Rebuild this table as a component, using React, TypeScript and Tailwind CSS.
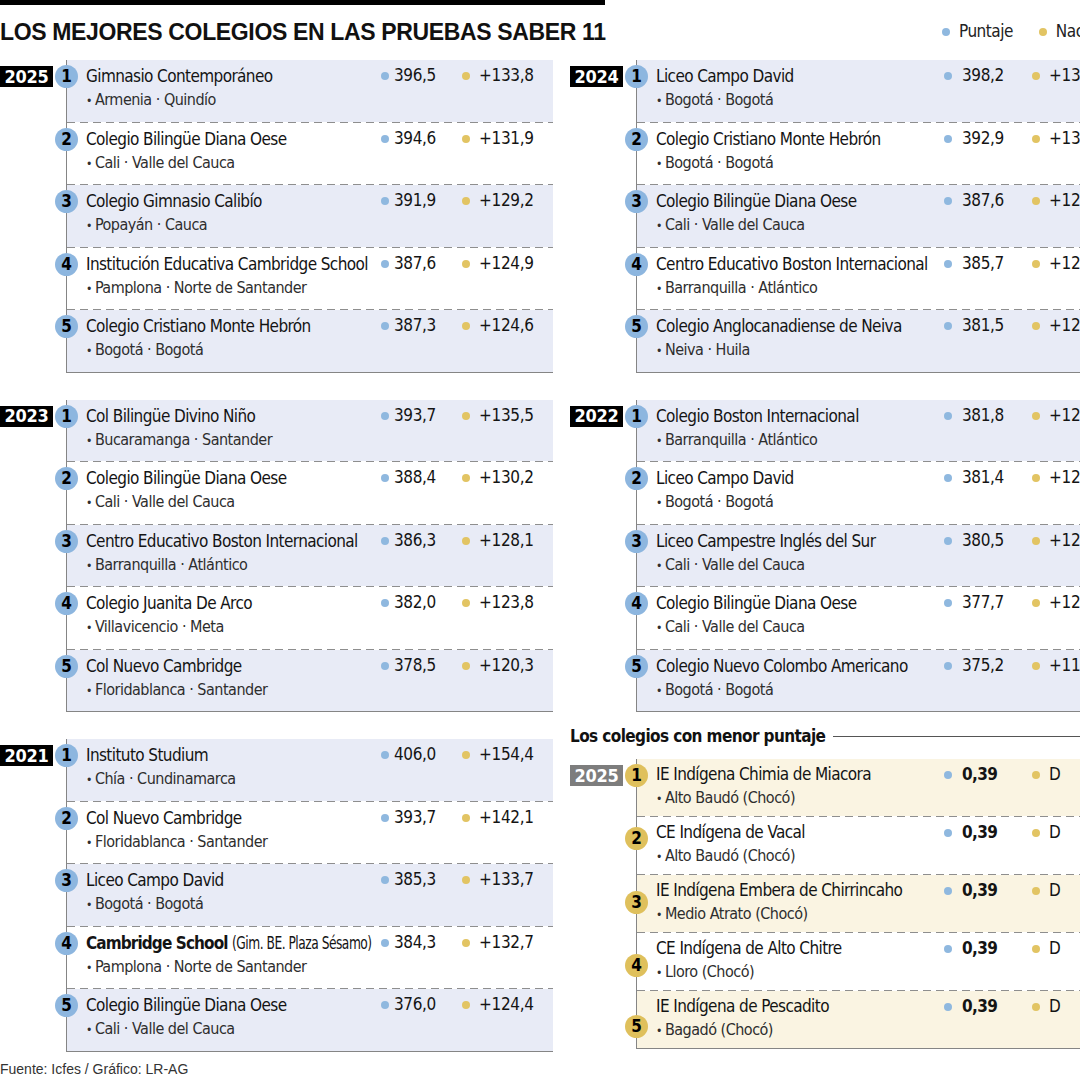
import React from "react";

type School = {
  name: string;
  bold?: string;
  place: string;
  score: string;
  nac: string;
};

const top2025: School[] = [
  { name: "Gimnasio Contemporáneo", place: "Armenia · Quindío", score: "396,5", nac: "+133,8" },
  { name: "Colegio Bilingüe Diana Oese", place: "Cali · Valle del Cauca", score: "394,6", nac: "+131,9" },
  { name: "Colegio Gimnasio Calibío", place: "Popayán · Cauca", score: "391,9", nac: "+129,2" },
  { name: "Institución Educativa Cambridge School", place: "Pamplona · Norte de Santander", score: "387,6", nac: "+124,9" },
  { name: "Colegio Cristiano Monte Hebrón", place: "Bogotá · Bogotá", score: "387,3", nac: "+124,6" },
];

const top2024: School[] = [
  { name: "Liceo Campo David", place: "Bogotá · Bogotá", score: "398,2", nac: "+136,9" },
  { name: "Colegio Cristiano Monte Hebrón", place: "Bogotá · Bogotá", score: "392,9", nac: "+131,6" },
  { name: "Colegio Bilingüe Diana Oese", place: "Cali · Valle del Cauca", score: "387,6", nac: "+126,3" },
  { name: "Centro Educativo Boston Internacional", place: "Barranquilla · Atlántico", score: "385,7", nac: "+124,4" },
  { name: "Colegio Anglocanadiense de Neiva", place: "Neiva · Huila", score: "381,5", nac: "+120,2" },
];

const top2023: School[] = [
  { name: "Col Bilingüe Divino Niño", place: "Bucaramanga · Santander", score: "393,7", nac: "+135,5" },
  { name: "Colegio Bilingüe Diana Oese", place: "Cali · Valle del Cauca", score: "388,4", nac: "+130,2" },
  { name: "Centro Educativo Boston Internacional", place: "Barranquilla · Atlántico", score: "386,3", nac: "+128,1" },
  { name: "Colegio Juanita De Arco", place: "Villavicencio · Meta", score: "382,0", nac: "+123,8" },
  { name: "Col Nuevo Cambridge", place: "Floridablanca · Santander", score: "378,5", nac: "+120,3" },
];

const top2022: School[] = [
  { name: "Colegio Boston Internacional", place: "Barranquilla · Atlántico", score: "381,8", nac: "+126,2" },
  { name: "Liceo Campo David", place: "Bogotá · Bogotá", score: "381,4", nac: "+125,8" },
  { name: "Liceo Campestre Inglés del Sur", place: "Cali · Valle del Cauca", score: "380,5", nac: "+124,9" },
  { name: "Colegio Bilingüe Diana Oese", place: "Cali · Valle del Cauca", score: "377,7", nac: "+122,1" },
  { name: "Colegio Nuevo Colombo Americano", place: "Bogotá · Bogotá", score: "375,2", nac: "+119,6" },
];

const top2021: School[] = [
  { name: "Instituto Studium", place: "Chía · Cundinamarca", score: "406,0", nac: "+154,4" },
  { name: "Col Nuevo Cambridge", place: "Floridablanca · Santander", score: "393,7", nac: "+142,1" },
  { name: "Liceo Campo David", place: "Bogotá · Bogotá", score: "385,3", nac: "+133,7" },
  { name: "(Gim. BE. Plaza Sésamo)", bold: "Cambridge School", place: "Pamplona · Norte de Santander", score: "384,3", nac: "+132,7" },
  { name: "Colegio Bilingüe Diana Oese", place: "Cali · Valle del Cauca", score: "376,0", nac: "+124,4" },
];

const bottom2025: School[] = [
  { name: "IE Indígena Chimia de Miacora", place: "Alto Baudó (Chocó)", score: "0,39", nac: "D" },
  { name: "CE Indígena de Vacal", place: "Alto Baudó (Chocó)", score: "0,39", nac: "D" },
  { name: "IE Indígena Embera de Chirrincaho", place: "Medio Atrato (Chocó)", score: "0,39", nac: "D" },
  { name: "CE Indígena de Alto Chitre", place: "Lloro (Chocó)", score: "0,39", nac: "D" },
  { name: "IE Indígena de Pescadito", place: "Bagadó (Chocó)", score: "0,39", nac: "D" },
];

// in the "menor puntaje" table the number circles drift down row by row
const goldCircleTop = ["top-[5px]", "top-[10px]", "top-[16px]", "top-[21px]", "top-[24px]"];

function Dashes() {
  return (
    <div className="h-px w-full bg-[repeating-linear-gradient(90deg,#8e8e8e_0_8px,transparent_8px_13px)]" />
  );
}

function Dot({ gold }: { gold?: boolean }) {
  return (
    <span
      className={`inline-block h-[8px] w-[8px] shrink-0 rounded-full ${
        gold ? "bg-[#e2c463]" : "bg-[#8fb8df]"
      }`}
    />
  );
}

function Ranking({
  year,
  schools,
  right,
  worst,
}: {
  year: string;
  schools: School[];
  right?: boolean;
  worst?: boolean;
}) {
  return (
    <div className="flex">
      <div className="w-[66px] shrink-0">
        <div
          className={`mt-[6px] flex h-[21px] w-[53px] items-center justify-center text-[18px] leading-none font-bold tracking-[-0.3px] text-white ${
            worst ? "bg-[#7d7d7d]" : "bg-black"
          }`}
        >
          {year}
        </div>
      </div>
      <div className="w-[487px] shrink-0 border-b-[1.5px] border-l-[1.5px] border-[#858585]">
        {schools.map((s, i) => (
          <div key={i}>
            {i > 0 && <Dashes />}
            <div
              className={`relative flex ${
                worst ? "h-[57px] pt-[4px]" : "h-[61.5px] pt-[4px]"
              } ${
                i % 2 === 0
                  ? worst
                    ? "bg-[#faf4e2]"
                    : "bg-[#e8ebf6]"
                  : "bg-white"
              }`}
            >
              <div
                className={`absolute left-[-12px] flex h-[23px] w-[23px] items-center justify-center rounded-full text-[17px] leading-none font-bold text-black ${
                  worst ? `bg-[#dfc05c] ${goldCircleTop[i]}` : "top-[5px] bg-[#8db6df]"
                }`}
              >
                {i + 1}
              </div>
              <div className={`${right ? "w-[307px]" : "w-[314px]"} shrink-0 pl-[19px]`}>
                <div
                  className={`text-[17px] tracking-[-0.6px] whitespace-nowrap text-[#141414] ${
                    worst ? "leading-[23px]" : "leading-[24px]"
                  }`}
                >
                  {s.bold ? (
                    <>
                      <span className="font-bold tracking-[-0.9px]">{s.bold}</span>{" "}
                      <span className="inline-block origin-left scale-x-[0.8]">{s.name}</span>
                    </>
                  ) : (
                    s.name
                  )}
                </div>
                <div
                  className={`text-[16px] tracking-[-0.5px] whitespace-nowrap text-[#2e2e2e] ${
                    worst ? "leading-[23px]" : "leading-[24px]"
                  }`}
                >
                  <span className="mr-[3px] text-[12px]">•</span>
                  {s.place}
                </div>
              </div>
              <div
                className={`flex h-[24px] shrink-0 items-center ${
                  right ? "w-[88px] gap-[10px]" : "w-[81px] gap-[5px]"
                }`}
              >
                <Dot />
                <span
                  className={`text-[17px] text-[#141414] ${
                    worst ? "font-bold tracking-[-0.6px]" : "tracking-[-0.4px]"
                  }`}
                >
                  {s.score}
                </span>
              </div>
              <div className="flex h-[24px] items-center gap-[9px]">
                <Dot gold />
                <span className="text-[17px] tracking-[-0.3px] text-[#141414]">{s.nac}</span>
              </div>
            </div>
          </div>
        ))}
      </div>
    </div>
  );
}

export default function App() {
  return (
    <div className="relative h-[1080px] w-[1080px] overflow-hidden bg-white font-['DejaVu_Sans_Condensed','DejaVu_Sans',sans-serif] font-stretch-condensed">
      <div className="w-[1123px]">
        <div className="h-[5px] w-[605px] bg-black" />
        <div className="mt-[13px] flex h-[28px] items-center">
          <h1 className="w-[942px] font-['Liberation_Sans',sans-serif] text-[23px] leading-[28px] font-bold tracking-[-0.35px] text-[#111] font-stretch-normal">
            LOS MEJORES COLEGIOS EN LAS PRUEBAS SABER 11
          </h1>
          <div className="flex items-center gap-[9px] text-[17px] tracking-[-0.5px] text-[#222]">
            <Dot />
            <span className="mr-[17px]">Puntaje</span>
            <Dot gold />
            <span>Nac.</span>
          </div>
        </div>

        <div className="mt-[14px] flex gap-[17px]">
          <div className="flex w-[553px] shrink-0 flex-col">
            <Ranking year="2025" schools={top2025} />
            <div className="mt-[27px]">
              <Ranking year="2023" schools={top2023} />
            </div>
            <div className="mt-[27px]">
              <Ranking year="2021" schools={top2021} />
            </div>
          </div>
          <div className="flex w-[553px] shrink-0 flex-col">
            <Ranking year="2024" schools={top2024} right />
            <div className="mt-[27px]">
              <Ranking year="2022" schools={top2022} right />
            </div>
            <div className="mt-[12px] flex items-center gap-[8px]">
              <span className="text-[17px] leading-[24px] font-bold tracking-[-0.6px] whitespace-nowrap text-[#111]">
                Los colegios con menor puntaje
              </span>
              <div className="h-px flex-1 bg-[#555]" />
            </div>
            <div className="mt-[11px]">
              <Ranking year="2025" schools={bottom2025} right worst />
            </div>
          </div>
        </div>

        <div className="mt-[8px] font-['Liberation_Sans',sans-serif] text-[14px] leading-[18px] text-[#333] font-stretch-normal">
          Fuente: Icfes / Gráfico: LR-AG
        </div>
      </div>
    </div>
  );
}
